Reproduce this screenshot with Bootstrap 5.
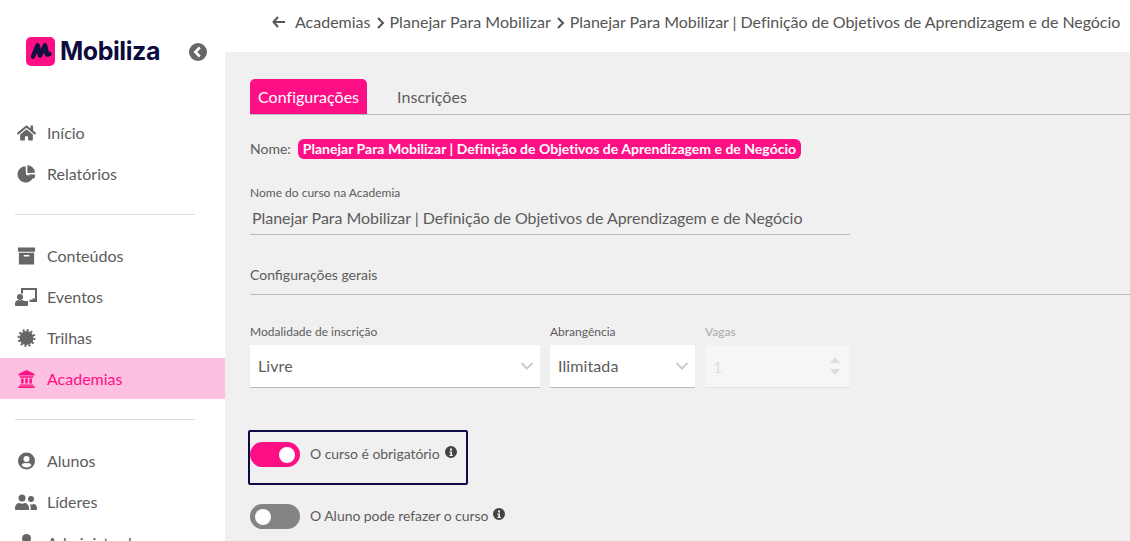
<!DOCTYPE html>
<html lang="pt-BR">
<head>
  <meta charset="UTF-8" />
  <title>Mobiliza</title>
  <link href="https://cdn.jsdelivr.net/npm/bootstrap@5.3.3/dist/css/bootstrap.min.css" rel="stylesheet" />
  <style>
    html, body { height: 541px; overflow: hidden; }
    body { font-family: Lato, "Liberation Sans", sans-serif; color: #5c5c5c; background: #fff; }
    .side-col { width: 225px; flex: none; height: 541px; overflow: hidden; }
    .brand-row { height: 112px; padding: 37px 18px 0 26px; }
    .brand-mark { width: 29px; height: 29px; border-radius: 5px; background: #ff0f85; flex: none; }
    .brand-name { font-family: Inter, sans-serif; font-weight: 700; font-size: 25px; letter-spacing: -.45px; color: #0d0b3e; margin-left: 5px; line-height: 29px; }
    .brand-toggle { margin-top: 6px; }
    .side-link { height: 41px; padding-left: 17px; gap: 11px; color: #5c5c5c; font-size: 16px; text-decoration: none; }
    .side-link svg { width: 19px; height: 18px; fill: #666; flex: none; }
    .side-link svg.wide-ico { width: 22px; margin: 0 -1px 0 -2px; }
    .side-link.is-active { background: #fdc0e0; color: #ff0f85; }
    .side-link.is-active svg { fill: #ff0f85; }
    .side-rule { margin: 20px 30px 20px 15px; border: 0; border-top: 1px solid #ddd; opacity: 1; }
    .top-bar { height: 52px; padding: 0 0 8px 47px; font-size: 16px; color: #555; }
    .crumb-back { margin-right: 10px; flex: none; }
    .top-bar a { color: inherit; text-decoration: none; }
    .top-bar .breadcrumb { --bs-breadcrumb-margin-bottom: 0; --bs-breadcrumb-item-padding-x: 5px; --bs-breadcrumb-divider-color: #555; flex-wrap: nowrap; white-space: nowrap; --bs-breadcrumb-divider: url("data:image/svg+xml,%3Csvg xmlns='http://www.w3.org/2000/svg' width='9' height='12' viewBox='0 0 9 12'%3E%3Cpath d='M2 1l5 5-5 5' fill='none' stroke='%23555' stroke-width='2'/%3E%3C/svg%3E"); }
    .top-bar .breadcrumb-item + .breadcrumb-item::before { padding-top: 5px; line-height: 1; }
    .top-bar .breadcrumb-item + .breadcrumb-item a { letter-spacing: .05px; }
    .top-bar .breadcrumb-item.active { color: #555; letter-spacing: -.05px; }
    .main-pane { background: #f0f0f0; height: 489px; padding: 27px 0 0 25px; overflow: hidden; }
    .tab-strip { --bs-nav-tabs-border-color: #bbb; --bs-nav-tabs-border-width: 1px; gap: 22px; }
    .tab-strip .nav-link { height: 35px; padding: 6px 8px; border: 0; color: #5c5c5c; font-size: 16px; letter-spacing: .03px; border-radius: 5px 5px 0 0; margin-bottom: 0; }
    .tab-strip .nav-link.active { background: #ff0f85; color: #fff; }
    .name-row { margin-top: 23px; font-size: 14px; gap: 7px; }
    .name-pill { background: #ff0f85; color: #fff; font-weight: 700; font-size: 14px; line-height: 20px; padding: 0 5px; border-radius: 6px; letter-spacing: .02px; }
    .field-label { font-size: 12px; line-height: 15px; margin-bottom: 3px; color: #5c5c5c; }
    .course-field { width: 600px; margin-top: 26px; }
    .course-field .form-control { background: transparent; border: 0; border-bottom: 1px solid #bbb; border-radius: 0; padding: 3px 2px 6px; height: 32px; color: #5c5c5c; font-size: 16px; letter-spacing: -.05px; box-shadow: none; }
    .section-title { font-size: 14px; line-height: 20px; margin-top: 30px; padding-bottom: 9px; border-bottom: 1px solid #bbb; }
    .select-row { margin-top: 29px; gap: 10px; width: 600px; }
    .select-row .field-label { margin-bottom: 6px; }
    .w-wide { width: 290px; }
    .w-narrow { width: 145px; }
    .plain-select, .plain-number { height: 43px; border: 0; border-bottom: 1px solid #bbb; border-radius: 0; color: #5c5c5c; font-size: 16px; padding: 0 8px; box-shadow: none; }
    .plain-select { letter-spacing: .1px; background-position: right 6px center; background-size: 14px 10px; background-image: url("data:image/svg+xml,%3Csvg xmlns='http://www.w3.org/2000/svg' viewBox='0 0 14 10'%3E%3Cpath d='M1.5 2l5.500 5.500L12.500 2' fill='none' stroke='%23ccc' stroke-width='2'/%3E%3C/svg%3E"); }
    .plain-number:disabled { background-color: #f6f6f6; border-bottom-color: #e4e4e4; color: #ddd; opacity: 1; background-repeat: no-repeat; background-position: right 10px center; background-size: 10px 18px; background-image: url("data:image/svg+xml,%3Csvg xmlns='http://www.w3.org/2000/svg' viewBox='0 0 10 18'%3E%3Cpath d='M5 0l5 6H0zM5 18l5-6H0z' fill='%23ddd'/%3E%3C/svg%3E"); }
    .label-off { color: #aaa !important; }
    .toggle-box { margin: 42px 0 0 -2px; width: 220px; height: 55px; border: 2px solid #0d0b46; border-radius: 2px; padding: 10px 0 0 0; }
    .toggle-plain { margin-top: 19px; }
    .toggle-row { gap: 10px; font-size: 14px; height: 25px; padding: 0; }
    .form-switch.toggle-row { padding-left: 0; margin: 0; min-height: 0; }
    .form-switch.toggle-row .form-check-input { width: 50px; height: 25px; margin: 0; float: none; border: 0; flex: none; background-size: 16px 16px; background-position: left 5px center; background-color: #848484; box-shadow: none; background-image: url("data:image/svg+xml,%3Csvg xmlns='http://www.w3.org/2000/svg' viewBox='-4 -4 8 8'%3E%3Ccircle r='4' fill='%23fff'/%3E%3C/svg%3E"); }
    .form-switch.toggle-row .form-check-input:checked { background-color: #ff0f85; background-position: right 5px center; }
    .toggle-row .form-check-label { margin: -2px 0 0; line-height: 25px; letter-spacing: -.05px; }
    .info-dot { width: 12px; height: 12px; fill: #444; margin: -6px 0 0 1.5px; vertical-align: middle; }
  </style>
</head>
<body>
  <div class="d-flex">
    <aside class="side-col">
      <div class="brand-row d-flex align-items-start justify-content-between">
        <div class="d-flex align-items-center">
          <svg class="brand-mark" viewBox="0 0 29 29"><path d="M7 19.500L11.500 8.500l2.500 10 5-10 2 9 2.500-.5" fill="none" stroke="#12103f" stroke-width="4.600" stroke-linejoin="round" stroke-linecap="round"/></svg>
          <span class="brand-name">Mobiliza</span>
        </div>
        <svg class="brand-toggle" width="18" height="18" viewBox="0 0 18 18"><circle cx="9" cy="9" r="9" fill="#666"/><path d="M10.800 4.500L6.300 9l4.500 4.500" fill="none" stroke="#fff" stroke-width="2.600"/></svg>
      </div>
      <nav class="d-flex flex-column">
        <a class="side-link d-flex align-items-center" href="#"><svg viewBox="0 0 576 512"><path d="M280.370 148.260L96 300.110V464a16 16 0 0 0 16 16l112.060-.29a16 16 0 0 0 15.920-16V368a16 16 0 0 1 16-16h64a16 16 0 0 1 16 16v95.640a16 16 0 0 0 16 16.050L464 480a16 16 0 0 0 16-16V300L295.670 148.260a12.190 12.190 0 0 0-15.300 0zM571.600 251.470L488 182.560V44.050a12 12 0 0 0-12-12h-56a12 12 0 0 0-12 12v72.610L318.470 43a48 48 0 0 0-61 0L4.340 251.470a12 12 0 0 0-1.600 16.900l25.500 31A12 12 0 0 0 45.150 301l235.220-193.740a12.190 12.190 0 0 1 15.300 0L530.900 301a12 12 0 0 0 16.900-1.600l25.500-31a12 12 0 0 0-1.700-16.930z"/></svg>Início</a>
        <a class="side-link d-flex align-items-center" href="#"><svg viewBox="0 0 20 20"><path d="M9 1.500a9 9 0 1 0 8.800 10.700L9.500 11z"/><path d="M11 .3a8.800 8.800 0 0 1 8.500 8.200L11 8.800z"/><path d="M12 10.500h7.700a9 9 0 0 1-1.600 5z"/></svg>Relatórios</a>
        <hr class="side-rule" />
        <a class="side-link d-flex align-items-center" href="#"><svg viewBox="0 0 20 18"><path d="M1 0h18v4.500H1zM2 5.500h16V18H2zM7 8v1.500h6V8z" fill-rule="evenodd"/></svg>Conteúdos</a>
        <a class="side-link d-flex align-items-center" href="#"><svg class="wide-ico" viewBox="0 0 22 18"><path d="M6 0h16v14h-7.500v-2.200H17.500V10.500h2.500V2H8v3.500H6z"/><circle cx="5" cy="9" r="3"/><path d="M0 16c0-3 2-4 3.500-4l1.500.5 1.500-.5c1 0 2 .3 2.800 1H13v3.500c0 .8-.5 1.500-1 1.500H1c-.6 0-1-.5-1-1.500z"/></svg>Eventos</a>
        <a class="side-link d-flex align-items-center" href="#"><svg viewBox="0 0 20 20"><circle cx="10" cy="10" r="7.800"/><circle cx="10" cy="10" r="8.800" fill="none" stroke="#666" stroke-width="2.200" stroke-dasharray="2.300 2.300"/></svg>Trilhas</a>
        <a class="side-link is-active d-flex align-items-center" href="#"><svg viewBox="0 0 20 20"><path d="M10 0l9 4.500V6H1V4.500zM2.500 7h15v1.500h-15zM4 9.500h2.800V15H4zM8.600 9.500h2.800V15H8.600zM13.200 9.500H16V15h-2.800zM2.500 16h15v1.500h-15zM1 18h18v2H1z"/></svg>Academias</a>
        <hr class="side-rule" />
        <a class="side-link d-flex align-items-center" href="#"><svg viewBox="0 0 18 18"><path fill-rule="evenodd" d="M9 .5a8.500 8.500 0 1 0 0 17 8.500 8.500 0 0 0 0-17zM9 4a3 3 0 1 1 0 6 3 3 0 0 1 0-6zm0 11.500a6.500 6.500 0 0 1-5-2.300c.7-1.300 2-2.200 3.300-2.200.6.200 1.100.3 1.700.3s1.100-.1 1.700-.3c1.300 0 2.600.9 3.300 2.200a6.500 6.500 0 0 1-5 2.300z"/></svg>Alunos</a>
        <a class="side-link d-flex align-items-center" href="#"><svg class="wide-ico" viewBox="0 0 22 18"><circle cx="7" cy="5" r="3.500"/><circle cx="16" cy="6" r="3"/><path d="M0 15c0-3 2-5 4.500-5 .8.500 1.600.7 2.500.7s1.700-.2 2.500-.7c2.500 0 4.500 2 4.500 5v1c0 .6-.4 1-1 1H1c-.6 0-1-.4-1-1z"/><path d="M15.500 17h5.500c.6 0 1-.4 1-1v-1c0-2.500-1.700-4-3.500-4-.8.400-1.500.6-2.500.6-.6 0-1-.1-1.500-.3 1 1 1.300 2.500 1.300 4.200z"/></svg>Líderes</a>
        <a class="side-link d-flex align-items-center" href="#"><svg viewBox="0 0 18 18"><circle cx="9" cy="4.500" r="4.500"/><path d="M1 16c0-3.500 2.500-6 5-6h6c2.500 0 5 2.500 5 6v2H1z"/></svg>Administradores</a>
      </nav>
    </aside>

    <div class="flex-grow-1 overflow-hidden">
      <header class="top-bar d-flex align-items-center">
        <svg class="crumb-back" width="13" height="12" viewBox="0 0 13 12"><path d="M6 1L1.500 6 6 11M2 6h11" fill="none" stroke="#555" stroke-width="2"/></svg>
        <ol class="breadcrumb">
          <li class="breadcrumb-item"><a href="#">Academias</a></li>
          <li class="breadcrumb-item"><a href="#">Planejar Para Mobilizar</a></li>
          <li class="breadcrumb-item active">Planejar Para Mobilizar | Definição de Objetivos de Aprendizagem e de Negócio</li>
        </ol>
      </header>
      <main class="main-pane">
        <ul class="nav nav-tabs tab-strip">
          <li class="nav-item"><a class="nav-link active" href="#">Configurações</a></li>
          <li class="nav-item"><a class="nav-link" href="#">Inscrições</a></li>
        </ul>
        <div class="name-row d-flex align-items-center">
          <span>Nome:</span>
          <span class="name-pill">Planejar Para Mobilizar | Definição de Objetivos de Aprendizagem e de Negócio</span>
        </div>
        <div class="course-field">
          <label class="field-label d-block" for="courseName">Nome do curso na Academia</label>
          <input id="courseName" class="form-control" type="text" value="Planejar Para Mobilizar | Definição de Objetivos de Aprendizagem e de Negócio" />
        </div>
        <div class="section-title">Configurações gerais</div>
        <div class="select-row d-flex">
          <div class="w-wide">
            <label class="field-label d-block" for="modeSelect">Modalidade de inscrição</label>
            <select id="modeSelect" class="form-select plain-select"><option>Livre</option></select>
          </div>
          <div class="w-narrow">
            <label class="field-label d-block" for="scopeSelect">Abrangência</label>
            <select id="scopeSelect" class="form-select plain-select"><option>Ilimitada</option></select>
          </div>
          <div class="w-narrow">
            <label class="field-label label-off d-block" for="seats">Vagas</label>
            <input id="seats" class="form-control plain-number" type="number" value="1" disabled />
          </div>
        </div>
        <div class="toggle-box">
          <div class="form-check form-switch toggle-row d-flex align-items-center">
            <input class="form-check-input" type="checkbox" role="switch" id="mandatory" checked />
            <label class="form-check-label" for="mandatory">O curso é obrigatório <svg class="info-dot" viewBox="0 0 12 12"><path fill-rule="evenodd" d="M6 0a6 6 0 1 0 0 12A6 6 0 0 0 6 0zm-1 2.500h2v2H5zM4.500 5.500h2.500v3.200h.8V10H4.500V8.700h.9V6.800h-.9z"/></svg></label>
          </div>
        </div>
        <div class="toggle-plain">
          <div class="form-check form-switch toggle-row d-flex align-items-center">
            <input class="form-check-input" type="checkbox" role="switch" id="retake" />
            <label class="form-check-label" for="retake">O Aluno pode refazer o curso <svg class="info-dot" viewBox="0 0 12 12"><path fill-rule="evenodd" d="M6 0a6 6 0 1 0 0 12A6 6 0 0 0 6 0zm-1 2.500h2v2H5zM4.500 5.500h2.500v3.200h.8V10H4.500V8.700h.9V6.800h-.9z"/></svg></label>
          </div>
        </div>
      </main>
    </div>
  </div>
  <script src="https://cdn.jsdelivr.net/npm/bootstrap@5.3.3/dist/js/bootstrap.bundle.min.js"></script>
</body>
</html>
